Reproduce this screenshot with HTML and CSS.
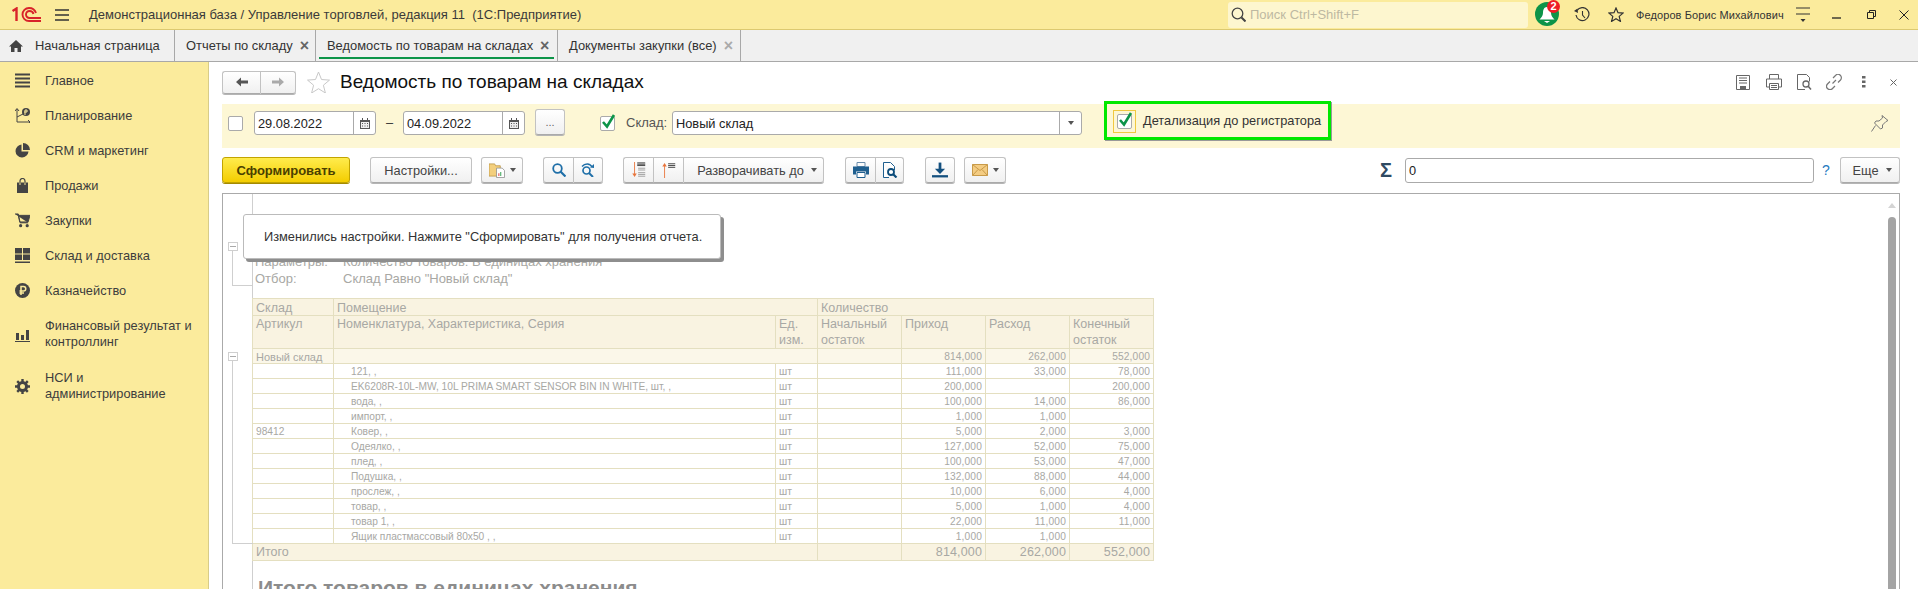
FILE: index.html
```html
<!DOCTYPE html>
<html lang="ru">
<head>
<meta charset="utf-8">
<title>Ведомость по товарам на складах</title>
<link rel="stylesheet" href="styles.css">
</head>
<body>
<header class="top">
  <svg class="logo" viewBox="0 0 30 15"><path d="M.5 4 4.500 1.500V14" fill="none" stroke="#d8232a" stroke-width="2.400"/><path d="M29 14H17a6.200 6.200 0 0 1 0-13c4 0 6 2 7 5M29 11H17.500a3.400 3.400 0 0 1 0-7c2.200 0 3.500 1 4 3" fill="none" stroke="#d8232a" stroke-width="1.900"/></svg>
  <svg class="burger" viewBox="0 0 14 12"><path d="M0 1h14M0 6h14M0 11h14" stroke="#333" stroke-width="1.300"/></svg>
  <span class="app-title">Демонстрационная база / Управление торговлей, редакция 11&nbsp; (1С:Предприятие)</span>
  <div class="search">
    <svg class="search-ico" viewBox="0 0 15 15"><circle cx="6.500" cy="6.500" r="5.300" fill="none" stroke="#444" stroke-width="1.300"/><path d="m10.500 10.500 4 4" stroke="#444" stroke-width="2"/></svg>
    <span>Поиск Ctrl+Shift+F</span>
  </div>
  <div class="bell">
    <svg viewBox="0 0 24 24"><circle cx="12" cy="12" r="12" fill="#0d9448"/><path d="M12 5c-3 0-4 3-4 6 0 3-2 5-3.500 6.500h15C18 16 16 14 16 11c0-3-1-6-4-6ZM9 19h6l-3 2Z" fill="#fff"/></svg>
    <span class="badge">2</span>
  </div>
  <svg class="ico-hist" viewBox="0 0 16 15"><path d="M3 3.500A6.500 6.500 0 1 1 2 8" fill="none" stroke="#333" stroke-width="1.200"/><path d="M8.500 4v4l2.500 3" fill="none" stroke="#333" stroke-width="1.100"/><path d="M0 4l3.500-2.500.5 4.500Z" fill="#333"/></svg>
  <svg class="ico-star" viewBox="0 0 16 15"><path d="m8 1 2 4.700 5 .4-3.800 3.300 1.200 5L8 11.800l-4.400 2.600 1.200-5L1 6.100l5-.4Z" fill="none" stroke="#333" stroke-width="1.200"/></svg>
  <span class="user">Федоров Борис Михайлович</span>
  <svg class="ico-menu" viewBox="0 0 14 16"><path d="M0 1h14M0 7h14" stroke="#333" stroke-width="1.200"/><path d="m4.500 12h5L7 15Z" fill="#333"/></svg>
  <svg class="win-min" viewBox="0 0 9 9"><path d="M0 8h9" stroke="#222" stroke-width="1.300"/></svg>
  <svg class="win-res" viewBox="0 0 9 9"><path d="M.5 2.500h6v6h-6ZM2.500 2.500v-2h6v6h-2" fill="none" stroke="#222"/></svg>
  <svg class="win-close" viewBox="0 0 10 10"><path d="m.5.500 9 9M9.500.500l-9 9" stroke="#222"/></svg>
</header>

<nav class="tabs">
  <div class="tab tab-home">
    <svg class="home" viewBox="0 0 14 12"><path d="M7 0 0 6.500h2V12h3.500V8h3v4H12V6.500h2Z" fill="#444"/></svg>
    <span>Начальная страница</span>
  </div>
  <div class="tab tab-reports"><span>Отчеты по складу</span><span class="x">×</span></div>
  <div class="tab tab-active"><span>Ведомость по товарам на складах</span><span class="x">×</span></div>
  <div class="tab tab-docs"><span>Документы закупки (все)</span><span class="x x-light">×</span></div>
</nav>

<div class="main">
  <aside class="side">
    <div class="item">
      <svg viewBox="0 0 15 15"><path d="M0 1.500h15M0 5.500h15M0 9.500h15M0 13.500h15" stroke="#444" stroke-width="2"/></svg>
      <span>Главное</span>
    </div>
    <div class="item">
      <svg viewBox="0 0 15 15"><path d="M2 1v13h13M2 9l6-3" fill="none" stroke="#444" stroke-width="1"/><path d="M0 3l2-2.500L4 3M13 12l2 2-2 2" fill="none" stroke="#444"/><circle cx="11" cy="4" r="4" fill="#444"/><path d="M10 2v5M10 2h2v2h-3" fill="none" stroke="#fbeb9c"/></svg>
      <span>Планирование</span>
    </div>
    <div class="item">
      <svg viewBox="0 0 15 15"><path d="M6.500 1.500a6.500 6.500 0 1 0 7 7h-7Z" fill="#444"/><path d="M8 0a7 7 0 0 1 7 7H8Z" fill="#444"/></svg>
      <span>CRM и маркетинг</span>
    </div>
    <div class="item">
      <svg viewBox="0 0 15 15"><path d="M2 4.500h11V15H2Z" fill="#444"/><path d="M5 7V3a2.500 2.500 0 0 1 5 0v4" fill="none" stroke="#444" stroke-width="1.200"/><path d="M5 4.500V7M10 4.500V7" stroke="#fbeb9c"/></svg>
      <span>Продажи</span>
    </div>
    <div class="item">
      <svg viewBox="0 0 16 15"><path d="M0 .5h3.500L5.500 10H14M3.500 2H16l-2 7H5Z" fill="#444" stroke="#444"/><circle cx="6" cy="13" r="1.700" fill="#444"/><circle cx="13" cy="13" r="1.700" fill="#444"/></svg>
      <span>Закупки</span>
    </div>
    <div class="item">
      <svg viewBox="0 0 15 15"><path d="M0 0h7v5.500H0ZM8 0h7v5.500H8ZM0 6.500h7V12H0ZM8 6.500h7V12H8ZM0 13.500h15V15H0Z" fill="#444"/></svg>
      <span>Склад и доставка</span>
    </div>
    <div class="item">
      <svg viewBox="0 0 15 15"><circle cx="7.500" cy="7.500" r="7.500" fill="#444"/><path d="M6 12V3.500h2.500a2 2 0 0 1 0 4.500H4.500M4.500 10H9" fill="none" stroke="#fbeb9c" stroke-width="1.500"/></svg>
      <span>Казначейство</span>
    </div>
    <div class="item item-two">
      <svg viewBox="0 0 15 15"><path d="M1 6h3v7H1ZM6 8h3v5H6ZM11 3h3v10h-3ZM0 14h15v1H0Z" fill="#444"/></svg>
      <span>Финансовый результат и<br>контроллинг</span>
    </div>
    <div class="item item-two">
      <svg viewBox="0 0 15 15"><circle cx="7.500" cy="7.500" r="4" fill="none" stroke="#444" stroke-width="3"/><path d="M7.500 0v3M7.500 12v3M0 7.500h3M12 7.500h3M2.200 2.200l2 2M10.800 10.800l2 2M12.800 2.200l-2 2M4.200 10.800l-2 2" stroke="#444" stroke-width="2.400"/></svg>
      <span>НСИ и<br>администрирование</span>
    </div>
  </aside>

  <main class="content">
    <div class="title-row">
      <div class="group nav-group">
        <button class="btn w38"><svg class="arrow" viewBox="0 0 12 10"><path d="M0 5l5-4.500V3.500h7v3H5v3Z" fill="#555"/></svg></button>
        <button class="btn w36"><svg class="arrow" viewBox="0 0 12 10"><path d="M12 5 7 .5V3.500H0v3h7v3Z" fill="#aaa"/></svg></button>
      </div>
      <svg class="fav" viewBox="0 0 23 22"><path d="m11.500 1 3 7.500 8 .6-6.100 5.100 2 7.800-6.900-4.300-6.900 4.300 2-7.800L.5 9.100l8-.6Z" fill="#fff" stroke="#c8c8c8"/></svg>
      <h1>Ведомость по товарам на складах</h1>
      <div class="title-tools">
        <svg class="t-save" viewBox="0 0 14 15"><path d="M.5.500h13v14H.5ZM3 3h8M3 5.500h8M3 8h8" fill="none" stroke="#666"/><path d="M4 11h6v3.500H4Z" fill="#666"/></svg>
        <svg class="t-print" viewBox="0 0 16 16"><path d="M3.500 5V.5h9V5M.5 5h15v8h-3M3.500 13h-3V5M3.500 9.500h9v6h-9ZM5 11.500h6M5 13.500h6" fill="none" stroke="#666"/></svg>
        <svg class="t-prev" viewBox="0 0 15 16"><path d="M8 15.500H.5V.5h9l3 3v4" fill="none" stroke="#666"/><circle cx="9" cy="10" r="3" fill="none" stroke="#666" stroke-width="1.300"/><path d="m11 12 3 3.500" stroke="#666" stroke-width="1.500"/></svg>
        <svg class="t-link" viewBox="0 0 16 16"><path d="M6.500 9.500 10 6M7 4l2.500-2.500a3 3 0 0 1 5 4.500L12 8.500M9 12l-2.500 2.500a3 3 0 0 1-5-4.500L4 7.500" fill="none" stroke="#777" stroke-width="1.200"/></svg>
        <svg class="t-dots" viewBox="0 0 4 12"><path d="M0 0h3.500v2.500H0ZM0 4.500h3.500V7H0ZM0 9h3.500v2.500H0Z" fill="#666"/></svg>
        <svg class="t-x" viewBox="0 0 7 7"><path d="m.5.500 6 6M6.500.500l-6 6" stroke="#666"/></svg>
      </div>
    </div>

    <div class="filter">
      <span class="check chk-first"></span>
      <div class="field date"><span class="val">29.08.2022</span><span class="cal"><svg viewBox="0 0 10 11"><path d="M0 2h10v9H0Z" fill="#555"/><path d="M1 4h8v6H1Z" fill="#eee"/><path d="M2 0h1v3H2ZM7 0h1v3H7ZM2 5h1v1H2ZM4.500 5h1v1h-1ZM7 5h1v1H7ZM2 7.500h1v1H2ZM4.500 7.500h1v1h-1ZM7 7.500h1v1H7Z" fill="#555"/></svg></span></div>
      <span class="dash">–</span>
      <div class="field date"><span class="val">04.09.2022</span><span class="cal"><svg viewBox="0 0 10 11"><path d="M0 2h10v9H0Z" fill="#555"/><path d="M1 4h8v6H1Z" fill="#eee"/><path d="M2 0h1v3H2ZM7 0h1v3H7ZM2 5h1v1H2ZM4.500 5h1v1h-1ZM7 5h1v1H7ZM2 7.500h1v1H2ZM4.500 7.500h1v1h-1ZM7 7.500h1v1H7Z" fill="#555"/></svg></span></div>
      <button class="btn dots-btn">...</button>
      <span class="check chk-sklad"><svg viewBox="0 0 16 16"><path d="m3 8 4 4.500L14 1" fill="none" stroke="#0d9448" stroke-width="2.600"/></svg></span>
      <span class="lbl">Склад:</span>
      <div class="field sklad"><span class="val">Новый склад</span><span class="drop"><i class="caret"></i></span></div>
      <div class="hl">
        <span class="focus"><span class="check chk-det"><svg viewBox="0 0 16 16"><path d="m3 8 4 4.500L14 1" fill="none" stroke="#0d9448" stroke-width="2.600"/></svg></span></span>
        <span class="hl-label">Детализация до регистратора</span>
      </div>
      <svg class="pin" viewBox="0 0 18 17"><path d="M11 .5l6 5-2 1-3.500 3.500 0 3-2 1-6-6 1.500-2h3L11.500 3ZM4.500 10.500.5 16.500" fill="none" stroke="#777"/></svg>
    </div>

    <div class="toolbar">
      <button class="btn primary">Сформировать</button>
      <button class="btn settings">Настройки...</button>
      <button class="btn w42 b3">
        <svg class="i16" viewBox="0 0 17 17"><path d="M0 2h6l1 2h5v3H9v8H0Z" fill="#f3cf7d" stroke="#b9913f" stroke-width=".8"/><path d="M8 6.500h6l2.500 2.500v7.500H8Z" fill="#fff" stroke="#8a8a8a" stroke-width=".8"/><path d="M10 12h1v3h-1Z" fill="#d33"/><path d="M12 10.500h1V15h-1Z" fill="#2a9d4a"/></svg>
        <i class="caret"></i>
      </button>
      <div class="group g-search">
        <button class="btn w30"><svg class="i14" viewBox="0 0 14 14"><circle cx="5.500" cy="5.500" r="4.300" fill="none" stroke="#1f6fa8" stroke-width="1.800"/><path d="m8.500 8.500 5 5" stroke="#1f6fa8" stroke-width="2.200"/></svg></button>
        <button class="btn w30"><svg class="i14" viewBox="0 0 14 14"><circle cx="5.500" cy="7.500" r="3.500" fill="none" stroke="#1f6fa8" stroke-width="1.700"/><path d="m8 10 4 4" stroke="#1f6fa8" stroke-width="2"/><path d="M1 3.500C4 0 9 0 11 4" fill="none" stroke="#1f6fa8" stroke-width="1.400"/><path d="m9 4.500 4 .5V1Z" fill="#1f6fa8"/></svg></button>
      </div>
      <div class="group g-expand">
        <button class="btn w30"><svg class="i16" viewBox="0 0 16 18"><path d="M3 0v15" stroke="#e8743b"/><path d="m.5 13 2.500 4 2.500-4Z" fill="#e8743b"/><path d="M6 1h9M6 2.500h9M6 4h9" stroke="#333"/><path d="M7 7h8M7 9h8M7 12h8M7 14h8M7 16h8" stroke="#999"/></svg></button>
        <button class="btn w30"><svg class="i16" viewBox="0 0 16 18"><path d="M3 3v15" stroke="#e8743b"/><path d="m.5 5 2.500-4 2.500 4Z" fill="#e8743b"/><path d="M7 2h8M7 4h8M7 6h8" stroke="#333"/></svg></button>
        <button class="btn expand">Разворачивать до<i class="caret"></i></button>
      </div>
      <div class="group g-print">
        <button class="btn w30"><svg class="i16" viewBox="0 0 16 15"><path d="M4 0h8v4H4Z" fill="none" stroke="#6a8cab"/><path d="M0 4h16v8h-3V9H3v3H0Z" fill="#1f5f8f"/><path d="M4 10h8v5H4Z" fill="#fff" stroke="#1f5f8f"/></svg></button>
        <button class="btn w29"><svg class="i16" viewBox="0 0 14 16"><path d="M.5.500h7l4 4V8M6 15.500H.5V.5" fill="#fff" stroke="#1f5f8f"/><circle cx="8" cy="10" r="3" fill="#fff" stroke="#0c4c7a" stroke-width="1.800"/><path d="m10 12 3.500 3.500" stroke="#0c4c7a" stroke-width="2.200"/></svg></button>
      </div>
      <button class="btn w30 b-down"><svg class="i16" viewBox="0 0 14 13"><path d="M7 0v7" stroke="#14507f" stroke-width="2.400"/><path d="m2.500 5.500h9L7 10Z" fill="#14507f"/><path d="M0 12h14" stroke="#14507f" stroke-width="2"/></svg></button>
      <button class="btn w42 b-mail">
        <svg class="i16" viewBox="0 0 16 12"><path d="M.5.500h15v11H.5Z" fill="#f4cc82" stroke="#c89a48"/><path d="m.5.500 7.500 6 7.500-6M.5 11.500l5.500-6M15.500 11.500 10 5.500" fill="none" stroke="#c89a48"/></svg>
        <i class="caret"></i>
      </button>
      <span class="sigma">Σ</span>
      <div class="field sum"><span class="val">0</span></div>
      <span class="help">?</span>
      <button class="btn more">Еще<i class="caret"></i></button>
    </div>

    <section class="report">
      <div class="outline o1"><span class="minus"></span></div>
      <div class="outline o2"><span class="minus"></span></div>
      <div class="sheet">
        <div class="param"><span class="pk">Параметры:</span><span>Количество товаров: В единицах хранения</span></div>
        <div class="param"><span class="pk">Отбор:</span><span>Склад Равно "Новый склад"</span></div>
        <table>
          <colgroup><col class="c1"><col class="c2"><col class="c3"><col class="c4"><col class="c4"><col class="c4"><col class="c4"></colgroup>
          <tr class="h h1"><td>Склад</td><td colspan="2">Помещение</td><td colspan="4">Количество</td></tr>
          <tr class="h h2"><td>Артикул</td><td>Номенклатура, Характеристика, Серия</td><td>Ед.<br>изм.</td><td>Начальный<br>остаток</td><td>Приход</td><td>Расход</td><td>Конечный<br>остаток</td></tr>
          <tr class="g"><td class="gname">Новый склад</td><td colspan="2"></td><td></td><td class="n">814,000</td><td class="n">262,000</td><td class="n">552,000</td></tr>
          <tr class="r"><td></td><td class="name">121, ,</td><td>шт</td><td></td><td class="n">111,000</td><td class="n">33,000</td><td class="n">78,000</td></tr>
          <tr class="r"><td></td><td class="name">EK6208R-10L-MW, 10L PRIMA SMART SENSOR BIN IN WHITE, шт, ,</td><td>шт</td><td></td><td class="n">200,000</td><td class="n"></td><td class="n">200,000</td></tr>
          <tr class="r"><td></td><td class="name">вода, ,</td><td>шт</td><td></td><td class="n">100,000</td><td class="n">14,000</td><td class="n">86,000</td></tr>
          <tr class="r"><td></td><td class="name">импорт, ,</td><td>шт</td><td></td><td class="n">1,000</td><td class="n">1,000</td><td class="n"></td></tr>
          <tr class="r"><td>98412</td><td class="name">Ковер, ,</td><td>шт</td><td></td><td class="n">5,000</td><td class="n">2,000</td><td class="n">3,000</td></tr>
          <tr class="r"><td></td><td class="name">Одеялко, ,</td><td>шт</td><td></td><td class="n">127,000</td><td class="n">52,000</td><td class="n">75,000</td></tr>
          <tr class="r"><td></td><td class="name">плед, ,</td><td>шт</td><td></td><td class="n">100,000</td><td class="n">53,000</td><td class="n">47,000</td></tr>
          <tr class="r"><td></td><td class="name">Подушка, ,</td><td>шт</td><td></td><td class="n">132,000</td><td class="n">88,000</td><td class="n">44,000</td></tr>
          <tr class="r"><td></td><td class="name">прослеж, ,</td><td>шт</td><td></td><td class="n">10,000</td><td class="n">6,000</td><td class="n">4,000</td></tr>
          <tr class="r"><td></td><td class="name">товар, ,</td><td>шт</td><td></td><td class="n">5,000</td><td class="n">1,000</td><td class="n">4,000</td></tr>
          <tr class="r"><td></td><td class="name">товар 1, ,</td><td>шт</td><td></td><td class="n">22,000</td><td class="n">11,000</td><td class="n">11,000</td></tr>
          <tr class="r"><td></td><td class="name">Ящик пластмассовый 80х50 , ,</td><td>шт</td><td></td><td class="n">1,000</td><td class="n">1,000</td><td class="n"></td></tr>
          <tr class="t"><td colspan="3">Итого</td><td></td><td class="n">814,000</td><td class="n">262,000</td><td class="n">552,000</td></tr>
        </table>
        <h2>Итого товаров в единицах хранения</h2>
      </div>
      <div class="notice">Изменились настройки. Нажмите "Сформировать" для получения отчета.</div>
      <div class="sb-arrow"></div>
      <div class="sb-thumb"></div>
    </section>
  </main>
</div>
</body>
</html>
```
FILE: styles.css
```css
* { box-sizing: border-box; }
html, body { margin: 0; height: 589px; overflow: hidden; }
body { font: 12.8px "Liberation Sans", Arial, sans-serif; color: #333; background: #fff; display: flex; flex-direction: column; }
svg { display: block; flex: none; }
button { font: inherit; color: inherit; padding: 0; }

.top { height: 30px; flex: none; background: #fbeb9c; border-bottom: 1px solid #dcc970; display: flex; align-items: center; position: relative; }
.logo { width: 30px; height: 15px; margin-left: 12px; }
.burger { width: 14px; height: 12px; margin-left: 13px; }
.app-title { margin-left: 20px; color: #3a3a3a; white-space: pre; width: 1139px; font-size: 13px; }
.search { width: 300px; height: 26px; background: #fdf6cf; border-radius: 3px; display: flex; align-items: center; color: #bdb9a2; padding-left: 3px; font-size: 13px; }
.search-ico { width: 15px; height: 15px; margin-right: 4px; }
.bell { width: 24px; height: 24px; margin: -2px 0 0 7px; position: relative; }
.bell svg { width: 24px; height: 24px; }
.badge { position: absolute; left: 12px; top: -2px; width: 13px; height: 13px; border-radius: 50%; background: #ee1c25; color: #fff; font: bold 11px/13px "Liberation Sans", sans-serif; text-align: center; }
.ico-hist { width: 16px; height: 15px; margin-left: 15px; }
.ico-star { width: 16px; height: 15px; margin-left: 18px; }
.user { margin-left: 12px; width: 160px; font-size: 11px; white-space: nowrap; letter-spacing: .1px; }
.ico-menu { width: 14px; height: 16px; }
.win-min { width: 9px; height: 9px; margin-left: 22px; }
.win-res { width: 9px; height: 9px; margin-left: 26px; }
.win-close { width: 10px; height: 10px; margin-left: 23px; }

.tabs { height: 32px; flex: none; background: #f0f0f0; border-bottom: 1px solid #a8a8a8; display: flex; }
.tab { height: 31px; display: flex; align-items: center; border-right: 1px solid #a8a8a8; color: #333; white-space: nowrap; position: relative; font-size: 12.9px; }
.tab-home { width: 175px; padding-left: 9px; }
.home { width: 14px; height: 12px; margin-right: 12px; }
.tab-reports { width: 141px; padding-left: 11px; }
.tab-active { width: 242px; padding-left: 11px; }
.tab-active::after { content: ""; position: absolute; left: 3px; right: 3px; bottom: 2px; height: 2px; background: #0d9448; }
.tab-docs { width: 183px; padding-left: 11px; }
.x { font: bold 16px/14px "Liberation Sans", sans-serif; color: #666; margin-left: 7px; }
.x-light { color: #aaa; }

.main { flex: 1; display: flex; min-height: 0; }
.side { width: 209px; flex: none; background: #fbeb9c; border-right: 1px solid #d8cc88; padding-top: 1px; }
.item { display: flex; align-items: center; height: 35px; padding-left: 15px; color: #3d3d3d; font-size: 12.8px; line-height: 16px; }
.item svg { width: 15px; height: 15px; margin-right: 15px; }
.item-two { height: 52px; }

.content { flex: 1; min-width: 0; padding: 8px 18px 0 13px; display: flex; flex-direction: column; }
.title-row { height: 24px; display: flex; align-items: center; flex: none; }
.group { display: flex; }
.btn { height: 26px; background: linear-gradient(#fff, #f0f0f0); border: 1px solid #c2c2c2; border-bottom-color: #aaa; border-radius: 3px; box-shadow: 0 1px 0 #b5b5b5; display: flex; align-items: center; justify-content: center; white-space: nowrap; }
.group .btn { border-radius: 0; border-right-width: 0; }
.group .btn:first-child { border-radius: 3px 0 0 3px; }
.group .btn:last-child { border-radius: 0 3px 3px 0; border-right-width: 1px; }
.nav-group .btn { height: 23px; }
.w38 { width: 38px; } .w36 { width: 36px; } .w30 { width: 30px; } .w29 { width: 29px; } .w42 { width: 42px; }
.arrow { width: 12px; height: 10px; }
.fav { width: 23px; height: 22px; margin-left: 11px; }
h1 { font-size: 19px; font-weight: normal; color: #111; margin: 0 0 0 10px; white-space: nowrap; }
.title-tools { margin-left: auto; display: flex; align-items: center; height: 24px; position: relative; width: 164px; }
.t-save { width: 14px; height: 15px; }
.t-print { width: 16px; height: 16px; margin-left: 16px; }
.t-prev { width: 15px; height: 16px; margin-left: 15px; }
.t-link { width: 16px; height: 16px; margin-left: 14px; }
.t-dots { width: 4px; height: 12px; margin-left: 20px; }
.t-x { width: 7px; height: 7px; margin-left: 24px; }

.filter { height: 44px; margin-top: 10px; background: #fdf7d5; display: flex; align-items: flex-start; padding-top: 7px; flex: none; }
.check { width: 15px; height: 15px; background: #fff; border: 1px solid #aaa; border-radius: 2px; display: block; flex: none; }
.check svg { width: 16px; height: 16px; margin: -3px 0 0 -1px; }
.chk-first { margin: 5px 0 0 6px; }
.field { height: 24px; background: #fff; border: 1px solid #aaa; border-radius: 3px; display: flex; align-items: center; flex: none; color: #222; }
.val { flex: 1; padding-left: 3px; }
.date { width: 122px; margin-left: 11px; }
.date + .dash + .date { margin-left: 10px; }
.cal { width: 22px; height: 100%; border-left: 1px solid #aaa; display: flex; align-items: center; justify-content: center; }
.cal svg { width: 10px; height: 11px; }
.dash { margin-left: 10px; width: 7px; line-height: 24px; }
.dots-btn { width: 30px; margin: -2px 0 0 10px; color: #666; font-size: 11px; }
.chk-sklad { margin: 5px 0 0 35px; }
.lbl { margin-left: 11px; line-height: 24px; color: #555; width: 46px; font-size: 13px; }
.sklad { width: 410px; }
.drop { width: 22px; height: 100%; border-left: 1px solid #aaa; display: flex; align-items: center; justify-content: center; }
.caret { display: block; width: 0; height: 0; border: 3.500px solid transparent; border-top: 4px solid #555; border-bottom: 0; flex: none; }
.hl { width: 227px; height: 39px; margin: -10px 0 0 22px; border: 3px solid #00e800; box-shadow: 1px 1px 0 #999; display: flex; align-items: center; flex: none; background: #fdf7d5; }
.focus { width: 23px; height: 23px; border: 1px solid #f0c840; margin: 1px 0 0 6px; display: flex; align-items: center; justify-content: center; flex: none; }
.chk-det { margin: 0; }
.hl-label { margin-left: 7px; white-space: nowrap; color: #333; }
.pin { width: 18px; height: 17px; margin: 4px 11px 0 auto; }

.toolbar { height: 26px; margin-top: 9px; display: flex; align-items: center; flex: none; }
.primary { width: 128px; background: linear-gradient(#ffec4d, #f4cd00); border-color: #c2a400; box-shadow: 0 1px 0 #a48a00; color: #4a3f00; font-weight: bold; font-size: 13px; }
.settings { width: 102px; margin-left: 20px; color: #444; }
.b3 { margin-left: 9px; }
.b3 .caret, .b-mail .caret { margin-left: 5px; }
.g-search { margin-left: 20px; }
.g-expand { margin-left: 20px; }
.g-print { margin-left: 21px; }
.b-down { margin-left: 21px; }
.b-mail { margin-left: 9px; }
.i16 { width: 16px; height: 16px; }
.i14 { width: 14px; height: 14px; }
.expand { width: 141px; color: #444; padding-left: 7px; }
.expand .caret { margin-left: 7px; }
.sigma { margin-left: auto; font: bold 20px/26px "Liberation Sans", sans-serif; color: #2e4a62; margin-right: 13px; }
.sum { width: 409px; height: 25px; }
.help { width: 26px; padding-left: 8px; color: #1f7ac0; font-size: 14px; }
.more { width: 60px; color: #444; padding-left: 4px; }
.more .caret { margin-left: 7px; }

.report { flex: 1; margin-top: 10px; border: 1px solid #aaa; border-bottom: 0; position: relative; overflow: hidden; padding-left: 29px; min-height: 0; }
.sheet { height: 100%; border-left: 1px solid #cfcfcf; padding-top: 59px; color: #a8a8a4; }
.param { height: 17px; line-height: 17px; padding-left: 2px; display: flex; font-size: 13px; }
.pk { width: 88px; }
table { border-collapse: collapse; table-layout: fixed; width: 901px; margin: 11px 0 0 -1px; color: #a8a8a4; background: #fff; }
.c1 { width: 81px; } .c2 { width: 442px; } .c3 { width: 42px; } .c4 { width: 84px; }
td { border: 1px solid #e4dfc0; padding: 0 3px; vertical-align: top; overflow: hidden; white-space: nowrap; }
.h td { background: #f9f3e1; font-size: 12.5px; }
.h1 td { height: 17px; padding-top: 2px; line-height: 14px; }
.h2 td { height: 33px; padding-top: 1px; line-height: 15.500px; }
.g td { height: 15px; background: #fbf7e9; font-size: 10.2px; padding-top: 2px; line-height: 12px; }
.g .gname { font-size: 11px; }
.r td { height: 15px; font-size: 10.2px; padding-top: 2px; line-height: 12px; }
.t td { height: 17px; background: #f9f3e1; font-size: 12.5px; padding-top: 1px; line-height: 15px; }
.name { padding-left: 17px; }
.n { text-align: right; letter-spacing: .15px; }
h2 { font-size: 21px; line-height: 24px; margin: 15px 0 0 5px; color: #8c8c8c; }

.outline { position: absolute; left: 9px; width: 21px; border-left: 1px solid #cfcfcf; border-bottom: 1px solid #cfcfcf; }
.o1 { top: 49px; height: 43px; }
.o2 { top: 159px; height: 191px; }
.minus { position: absolute; left: -5px; top: -1px; width: 10px; height: 9px; border: 1px solid #cfcfcf; background: #fff; }
.minus::after { content: ""; position: absolute; left: 1px; right: 1px; top: 3px; height: 1px; background: #aaa; }
.notice { position: absolute; left: 20px; top: 20px; width: 478px; height: 45px; background: #fff; border: 1px solid #bbb; border-radius: 3px; box-shadow: 3px 3px 0 #8e8e8e; line-height: 44px; padding-left: 20px; color: #333; white-space: nowrap; }
.sb-arrow { position: absolute; right: 3px; top: 9px; width: 0; height: 0; border: 4px solid transparent; border-bottom: 5px solid #d4d4d4; border-top: 0; }
.sb-thumb { position: absolute; right: 3px; top: 23px; bottom: 0; width: 8px; background: #a4a4a4; border-radius: 4px 4px 0 0; }
```
